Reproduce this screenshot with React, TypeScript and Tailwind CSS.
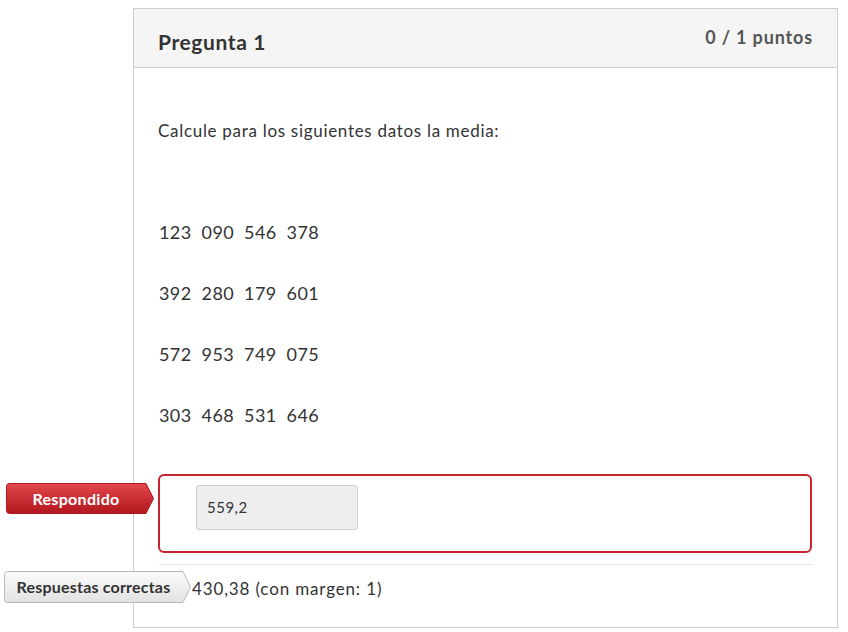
import React from "react";

function Tag({
  text,
  width,
  height,
  tip,
  variant,
}: {
  text: string;
  width: number;
  height: number;
  tip: number;
  variant: "red" | "gray";
}) {
  const w = width;
  const h = height;
  const r = 3;
  const body = w - tip;
  const d = `M ${r + 0.5} 0.5 H ${body} L ${w - 0.5} ${h / 2} L ${body} ${h - 0.5} H ${r + 0.5} Q 0.5 ${h - 0.5} 0.5 ${h - 0.5 - r} V ${r + 0.5} Q 0.5 0.5 ${r + 0.5} 0.5 Z`;
  const id = variant === "red" ? "gRed" : "gGray";
  return (
    <div className="relative flex items-center" style={{ width: w, height: h }}>
      <svg className="absolute inset-0" width={w} height={h} viewBox={`0 0 ${w} ${h}`}>
        <defs>
          {variant === "red" ? (
            <linearGradient id={id} x1="0" y1="0" x2="0" y2="1">
              <stop offset="0" stopColor="#e2474c" />
              <stop offset="1" stopColor="#b3171f" />
            </linearGradient>
          ) : (
            <linearGradient id={id} x1="0" y1="0" x2="0" y2="1">
              <stop offset="0" stopColor="#fbfbfb" />
              <stop offset="1" stopColor="#e2e2e2" />
            </linearGradient>
          )}
        </defs>
        <path
          d={d}
          fill={`url(#${id})`}
          stroke={variant === "red" ? "#b3171f" : "#b8b8b8"}
          strokeWidth="1"
        />
      </svg>
      <span
        className={
          variant === "red"
            ? "relative text-[16px] tracking-[0.3px] font-bold text-white"
            : "relative text-[16px] tracking-[0.2px] font-bold text-[#333]"
        }
        style={{ width: body, textAlign: "center" }}
      >
        {text}
      </span>
    </div>
  );
}

export default function App() {
  const rows = [
    "123  090  546  378",
    "392  280  179  601",
    "572  953  749  075",
    "303  468  531  646",
  ];
  return (
    <div
      className="relative w-[848px] h-[632px] bg-white text-[#333]"
      style={{ fontFamily: "Lato, 'Noto Sans', sans-serif" }}
    >
      <div className="absolute left-[133px] top-[8px] w-[705px] h-[620px] border border-[#c7cdd1] bg-white flex flex-col">
        <div className="h-[59px] bg-[#f5f5f5] border-b border-[#c7cdd1] flex justify-between px-[24px]">
          <div className="pt-[20px] text-[21px] tracking-[0.6px] leading-[26px] font-bold text-[#333]">Pregunta 1</div>
          <div className="pt-[17px] text-[18px] tracking-[0.85px] leading-[22px] font-bold text-[#555]">0 / 1 puntos</div>
        </div>
        <div className="px-[24px] pt-[52px]">
          <div className="text-[17px] tracking-[0.7px] leading-[22px]">Calcule para los siguientes datos la media:</div>
          <div className="mt-[79px] flex flex-col gap-[39px] pl-[1px]">
            {rows.map((r) => (
              <div key={r} className="text-[18px] tracking-[0.4px] leading-[22px] whitespace-pre">
                {r}
              </div>
            ))}
          </div>
          <div className="mt-[48px] mr-[1px] h-[79px] border-2 border-[#c8242d] rounded-[6px] pl-[36px] pt-[9px]">
            <div className="w-[162px] h-[45px] bg-[#eeeeee] border border-[#cfcfcf] rounded-[3px] flex items-center px-[10px] text-[15px] tracking-[0.5px]">
              559,2
            </div>
          </div>
          <div className="mt-[11px] mx-[1px] border-t border-[#e2e2e2]" />
          <div className="mt-[13px] pl-[34px] text-[17px] tracking-[0.85px] leading-[22px]">430,38 (con margen: 1)</div>
        </div>
      </div>
      <div className="absolute left-[6px] top-[483px]">
        <Tag text="Respondido" width={148} height={31} tip={8} variant="red" />
      </div>
      <div className="absolute left-[4px] top-[571px]">
        <Tag text="Respuestas correctas" width={187} height={32} tip={8} variant="gray" />
      </div>
    </div>
  );
}
